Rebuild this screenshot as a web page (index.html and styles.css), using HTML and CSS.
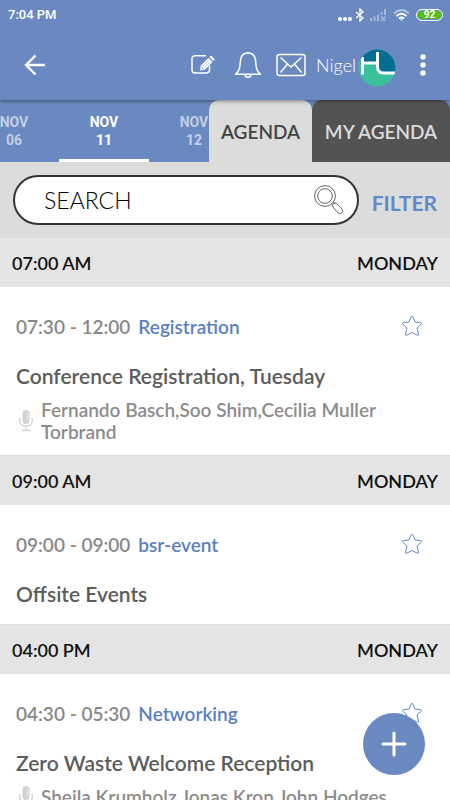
FILE: index.html
```html
<!DOCTYPE html>
<html lang="en">
<head>
<meta charset="utf-8">
<meta name="viewport" content="width=device-width, initial-scale=1">
<title>Agenda</title>
<link rel="stylesheet" href="styles.css">
</head>
<body>
<div class="app">
  <div class="status">
    <span>7:04 PM</span>
    <div class="status-icons">
      <svg width="16" height="14" viewBox="0 0 16 14" fill="#fff"><circle cx="3" cy="11" r="2"/><circle cx="8" cy="11" r="2"/><circle cx="13" cy="11" r="2"/></svg>
      <svg class="bluetooth" width="10" height="14" viewBox="0 0 10 14" fill="none" stroke="#fff" stroke-width="1.3"><path d="M1 4l7 6-3 3V1l3 3-7 6"/></svg>
      <svg class="signal" width="17" height="14" viewBox="0 0 17 14" fill="#fff" opacity=".4"><path d="M0 10h2v3H0zM3.500 8.500h2V13h-2zM7 6.500h2V13H7zM10.500 4h2v3h-2zM14 1h2v6h-2z"/><path d="M11 8.500l4.500 4.500m0-4.500L11 13" stroke="#fff" stroke-width="1.500"/></svg>
      <svg class="wifi" width="17" height="14" viewBox="0 0 17 14" fill="none" stroke="#fff" stroke-width="1.800"><path d="M1 5.500Q8.500-1.500 16 5.500" opacity=".5"/><path d="M3.500 8Q8.500 3.500 13.500 8M6 10.500q2.500-2 5 0"/><path d="M7 11.500h3l-1.500 1.500z" fill="#fff" stroke="none"/></svg>
      <span class="battery">92</span>
    </div>
  </div>

  <header class="bar">
    <button class="icon-btn back" aria-label="Back">
      <svg width="22" height="22" viewBox="0 0 22 22" fill="none" stroke="#fff" stroke-width="2.400"><path d="M21 11H2.500M11.500 1.500L2 11l9.500 9.500"/></svg>
    </button>
    <button class="icon-btn edit" aria-label="Notes">
      <svg width="25" height="22" viewBox="0 0 25 22"><path d="M16 1.800H5.500Q2 1.800 2 5v10.500Q2 19 5.500 19H16q3.500 0 3.500-3.500v-4" fill="none" stroke="#fff" stroke-width="1.500"/><path d="M10 16.500l.8-5 7.700-7.500 4 4-7.500 7.500zM19.400 3.100l1.700-1.600 3.800 3.800-1.600 1.800z" fill="#fff"/><path d="M13 12l6-6M14.500 13.500l6-6" stroke="#6b89c1" stroke-width=".5"/><circle cx="12.400" cy="14.200" r=".8" fill="#6b89c1"/></svg>
    </button>
    <button class="icon-btn bell" aria-label="Notifications">
      <svg width="28" height="28" viewBox="0 0 28 28" fill="none" stroke="#fff" stroke-width="1.500"><path d="M1.500 23.200Q6 20 6.200 12C6.300 5 9.500 2 14 1.800c4.500.2 7.700 3.200 7.800 10.200q.2 8 4.700 11.200z" stroke-linejoin="round"/><path d="M11 23.500q0 2.800 3 2.800t3-2.800"/></svg>
    </button>
    <button class="icon-btn mail" aria-label="Messages">
      <svg width="30" height="24" viewBox="0 0 30 24" fill="none" stroke="#fff" stroke-width="1.500"><rect x="1" y="1.500" width="28" height="21" rx="2.500"/><path d="M4.500 4.500L15 14 25.500 4.500M4.500 19.500l7-8.500M25.500 19.500l-7-8.500"/></svg>
    </button>
    <a class="user" href="#profile">
      <span>Nigel</span>
      <svg width="38" height="38" viewBox="0 0 38 38"><defs><clipPath id="disc"><circle cx="19" cy="19" r="18.500"/></clipPath></defs><g clip-path="url(#disc)"><path fill="#3cbf9c" d="M0 0h38v38H0z"/><path fill="#036d93" d="M3 0h35v24H19V14H3z"/><path fill="none" stroke="#fff" stroke-width="3" d="M4.500 8v17.500M4.500 14H18M19.500 3v14.500q0 6.500 6 6.500H38"/></g></svg>
    </a>
    <button class="icon-btn more" aria-label="More">
      <svg width="6" height="22" viewBox="0 0 6 22" fill="#fff"><circle cx="3" cy="3" r="2.700"/><circle cx="3" cy="11" r="2.700"/><circle cx="3" cy="19" r="2.700"/></svg>
    </button>
  </header>

  <nav class="tabs">
    <div class="dates">
      <button class="date">NOV<br>06</button>
      <button class="date current">NOV<br>11</button>
      <button class="date">NOV<br>12</button>
    </div>
    <button class="tab agenda">AGENDA</button>
    <button class="tab mine">MY AGENDA</button>
  </nav>

  <form class="search">
    <div class="field">
      <input type="text" placeholder="SEARCH" aria-label="Search">
      <svg width="30" height="30" viewBox="0 0 30 30" fill="none" stroke="#666" stroke-width="1"><circle cx="11" cy="11" r="10.400"/><circle cx="11" cy="11" r="7.300"/><path d="M17.300 19.300l2 2M19.300 17.300l2 2"/><path d="M18.500 21.500q-.8-2.500 2-3.500 1.500-.3 2.500 1l5 5q1.500 1.800-.2 3.800-2 1.800-3.800.2z"/></svg>
    </div>
    <button type="button" class="filter">FILTER</button>
  </form>

  <main>
    <h2 class="slot"><span>07:00 AM</span><span>MONDAY</span></h2>
    <article class="card">
      <div class="meta"><time>07:30 - 12:00</time><a href="#registration">Registration</a>
        <button class="icon-btn star" aria-label="Add to my agenda"><svg width="22" height="22" viewBox="0 0 22 22" fill="none" stroke="#6488c8" stroke-linejoin="round"><path d="M11 1q.5 0 .8.700L14 7l5.500.6q2 .3.700 1.600L16 13l1.500 6q.2 1.800-1.200 1.200L11 17.500l-5.300 2.700q-1.400.6-1.200-1.200L6 13 1.800 9.200Q.5 7.900 2.500 7.600L8 7l2.200-5.300Q10.500 1 11 1z"/></svg></button></div>
      <h3>Conference Registration, Tuesday</h3>
      <div class="speakers"><svg width="14" height="22" viewBox="0 0 14 22"><rect x="3.500" y="0" width="7" height="14" rx="3.500" fill="#d2d2d2"/><path d="M.8 8v3q0 5 6.200 5t6.200-5V8M7 16v4M2.500 20.500h9" fill="none" stroke="#d2d2d2" stroke-width="1.400"/><path d="M7 4h3.500M7 6.500h3.500M7 9h3.500" stroke="#f4f4f4" stroke-width=".8"/></svg><p>Fernando Basch,Soo Shim,Cecilia Muller Torbrand</p></div>
    </article>

    <h2 class="slot"><span>09:00 AM</span><span>MONDAY</span></h2>
    <article class="card">
      <div class="meta"><time>09:00 - 09:00</time><a href="#bsr-event">bsr-event</a>
        <button class="icon-btn star" aria-label="Add to my agenda"><svg width="22" height="22" viewBox="0 0 22 22" fill="none" stroke="#6488c8" stroke-linejoin="round"><path d="M11 1q.5 0 .8.700L14 7l5.500.6q2 .3.700 1.600L16 13l1.500 6q.2 1.800-1.200 1.200L11 17.500l-5.300 2.700q-1.400.6-1.200-1.200L6 13 1.800 9.200Q.5 7.900 2.500 7.600L8 7l2.200-5.300Q10.500 1 11 1z"/></svg></button></div>
      <h3>Offsite Events</h3>
    </article>

    <h2 class="slot"><span>04:00 PM</span><span>MONDAY</span></h2>
    <article class="card">
      <div class="meta"><time>04:30 - 05:30</time><a href="#networking">Networking</a>
        <button class="icon-btn star" aria-label="Add to my agenda"><svg width="22" height="22" viewBox="0 0 22 22" fill="none" stroke="#6488c8" stroke-linejoin="round"><path d="M11 1q.5 0 .8.700L14 7l5.500.6q2 .3.700 1.600L16 13l1.500 6q.2 1.800-1.200 1.200L11 17.500l-5.300 2.700q-1.400.6-1.200-1.200L6 13 1.800 9.200Q.5 7.900 2.500 7.600L8 7l2.200-5.300Q10.500 1 11 1z"/></svg></button></div>
      <h3>Zero Waste Welcome Reception</h3>
      <div class="speakers"><svg width="14" height="22" viewBox="0 0 14 22"><rect x="3.500" y="0" width="7" height="14" rx="3.500" fill="#d2d2d2"/><path d="M.8 8v3q0 5 6.200 5t6.200-5V8M7 16v4M2.500 20.500h9" fill="none" stroke="#d2d2d2" stroke-width="1.400"/><path d="M7 4h3.500M7 6.500h3.500M7 9h3.500" stroke="#f4f4f4" stroke-width=".8"/></svg><p>Sheila Krumholz,Jonas Kron,John Hodges</p></div>
    </article>
  </main>

  <button class="fab" aria-label="Add">
    <svg width="26" height="26" viewBox="0 0 26 26" stroke="#fff" stroke-width="3" stroke-linecap="round"><path d="M13 2v22M2 13h22"/></svg>
  </button>
</div>
</body>
</html>
```
FILE: styles.css
```css
* { box-sizing: border-box; }

body {
  margin: 0;
  font-family: Lato, "Liberation Sans", sans-serif;
  background: #fff;
}

button, input {
  font: inherit;
  border: 0;
  background: none;
  padding: 0;
  margin: 0;
}

h2, h3, p { margin: 0; }
a { text-decoration: none; }
svg { display: block; flex: none; }

.app {
  display: flex;
  flex-direction: column;
  height: 100vh;
  overflow: hidden;
}

.status {
  position: relative;
  z-index: 2;
  display: flex;
  justify-content: space-between;
  align-items: center;
  flex: none;
  height: 30px;
  padding: 0 7px 0 8px;
  background: #6b89c1;
  color: #fff;
  font: 500 13px/30px Roboto, sans-serif;
}

.status-icons { display: flex; align-items: center; }
.bluetooth { margin-left: 2px; }
.signal { margin-left: 5px; }
.wifi { margin-left: 6px; }

.battery {
  width: 27px;
  height: 12px;
  margin-left: 6px;
  border: 1px solid #fff;
  border-radius: 6px;
  background: #55bd1c;
  box-shadow: inset 0 0 0 1px #6b89c1;
  font: 700 10px/10px Roboto, sans-serif;
  text-align: center;
}

.bar {
  position: relative;
  z-index: 1;
  display: flex;
  align-items: center;
  flex: none;
  height: 70px;
  padding: 0 24px;
  background: #6b89c1;
  box-shadow: 0 1px 4px rgba(0, 0, 0, .45);
}

.edit { margin-left: auto; }
.bell { margin-left: 19px; }
.mail { margin-left: 14px; }
.more { margin-left: 24px; }

.user {
  display: flex;
  align-items: center;
  gap: 2px;
  margin-left: 10px;
  color: #fff;
  font-size: 18px;
  font-weight: 300;
}
.user svg { margin-top: 6px; }

.tabs {
  display: flex;
  flex: none;
  height: 62px;
  background: #6b89c1;
}

.dates {
  display: flex;
  justify-content: center;
  flex: 1;
  min-width: 0;
  padding-right: 1px;
  overflow: hidden;
}

.date {
  flex: none;
  width: 90px;
  padding-top: 3px;
  border-bottom: 3px solid transparent;
  color: #c3cfe6;
  font: 700 14px/18px Roboto, sans-serif;
}

.current {
  border-bottom-color: #fff;
  color: #fff;
}

.tab {
  flex: none;
  border-radius: 10px 10px 0 0;
  font-size: 19px;
  font-weight: 600;
}

.agenda {
  width: 103px;
  background: #dcdcdc;
  color: #444;
}

.mine {
  width: 138px;
  background: #535353;
  color: #dcdcdc;
}

.search {
  display: flex;
  align-items: center;
  flex: none;
  gap: 13px;
  height: 75px;
  padding: 0 13px;
  background: #dcdcdc;
}

.field {
  display: flex;
  align-items: center;
  flex: 1;
  min-width: 0;
  height: 50px;
  padding: 0 13px 0 29px;
  border: 2px solid #333;
  border-radius: 25px;
  background: #fff;
}

.field input {
  flex: 1;
  min-width: 0;
  color: #000;
  font-size: 23px;
  font-weight: 300;
}
.field input::placeholder { color: #000; opacity: 1; }

.filter {
  padding-top: 6px;
  color: #6488c8;
  font-size: 21px;
  font-weight: 700;
}

main { flex: 1; min-height: 0; overflow: hidden; }

.slot {
  display: flex;
  justify-content: space-between;
  align-items: center;
  height: 50px;
  padding: 1px 12px 0;
  border-top: 1px solid #dcdcdc;
  background: #e4e4e4;
  color: #111;
  font-size: 18px;
  font-weight: 600;
}

.card { padding: 27px 16px 12px; }

.meta {
  display: flex;
  align-items: center;
  gap: 8px;
  height: 24px;
  color: #888;
  font-size: 19px;
  font-weight: 600;
}
.meta a { color: #5a80c2; }
.star { margin: 0 11px 0 auto; }

.card h3 {
  margin: 24px 0 4px;
  color: #5c5c5c;
  font-size: 21px;
  font-weight: 600;
  line-height: 28px;
}

.speakers {
  display: flex;
  align-items: center;
  gap: 8px;
  padding: 5px 0 0 3px;
  color: #8c8c8c;
  font-size: 19px;
  font-weight: 600;
  line-height: 22px;
}

.fab {
  position: fixed;
  right: 25px;
  bottom: 25px;
  display: flex;
  align-items: center;
  justify-content: center;
  width: 62px;
  height: 62px;
  border-radius: 50%;
  background: #6b89c1;
}
```
